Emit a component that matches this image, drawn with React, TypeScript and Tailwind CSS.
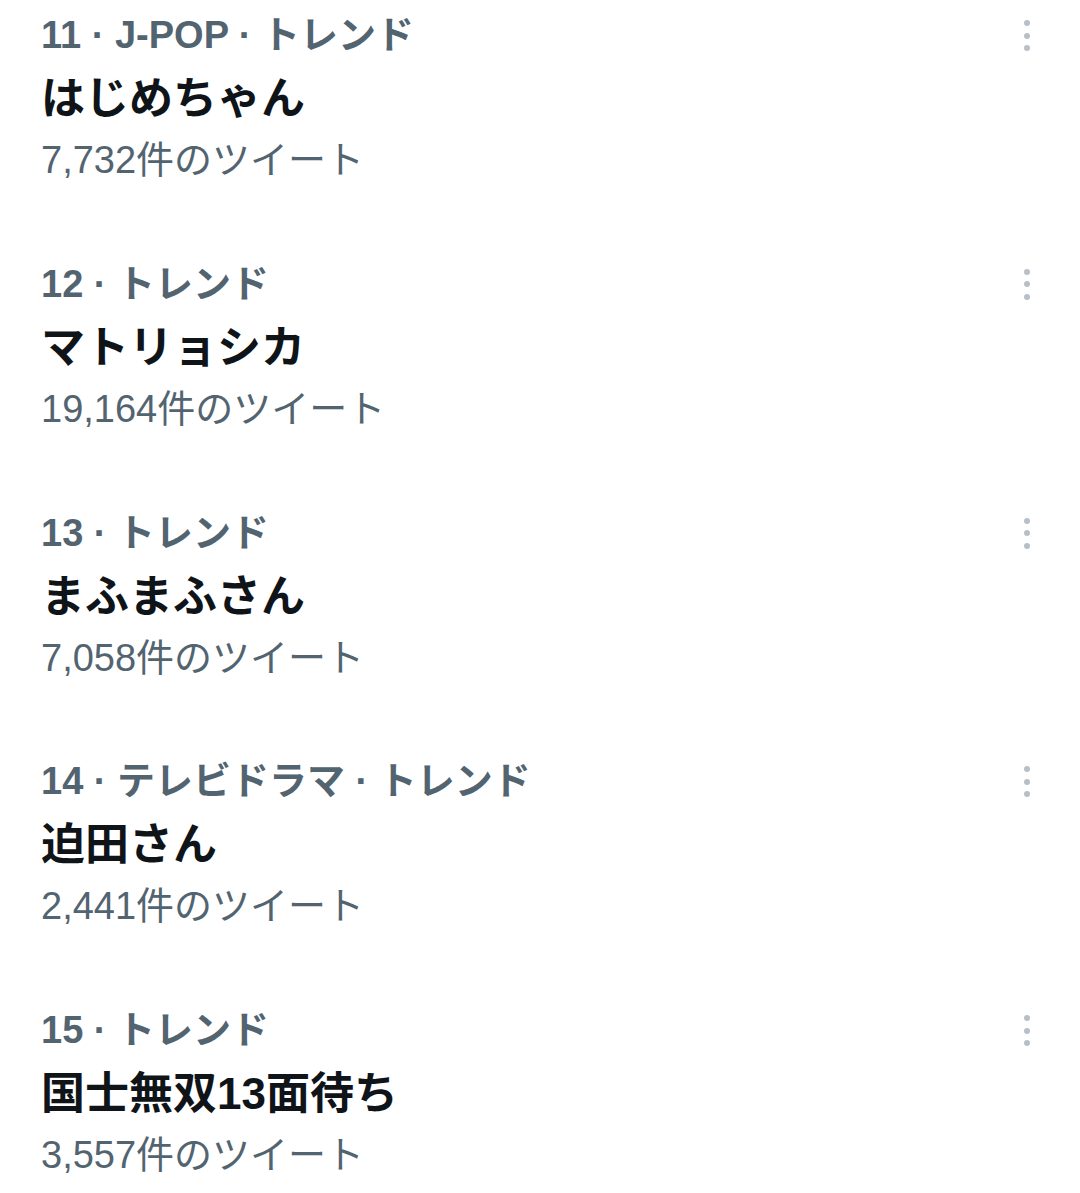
import React from 'react';

type Trend = { meta: string; title: string; count: string };

const trends: Trend[] = [
  { meta: '11 · J-POP · トレンド', title: 'はじめちゃん', count: '7,732件のツイート' },
  { meta: '12 · トレンド', title: 'マトリョシカ', count: '19,164件のツイート' },
  { meta: '13 · トレンド', title: 'まふまふさん', count: '7,058件のツイート' },
  { meta: '14 · テレビドラマ · トレンド', title: '迫田さん', count: '2,441件のツイート' },
  { meta: '15 · トレンド', title: '国士無双13面待ち', count: '3,557件のツイート' },
];

function MoreDots() {
  return (
    <div className="flex flex-col items-center gap-[6.5px] pt-[1px]">
      <span className="block w-[6px] h-[6px] rounded-full bg-[#b8bfc6]" />
      <span className="block w-[6px] h-[6px] rounded-full bg-[#b8bfc6]" />
      <span className="block w-[6px] h-[6px] rounded-full bg-[#b8bfc6]" />
    </div>
  );
}

function TrendRow({ trend }: { trend: Trend }) {
  return (
    <div className="flex justify-between pb-[62.8px]">
      <div className="flex flex-col">
        <div className="text-[38px] leading-[62px] font-bold text-[#536471] whitespace-nowrap">
          {trend.meta}
        </div>
        <div className="mt-[2px] text-[44px] leading-[62px] font-bold text-[#0f1419] whitespace-nowrap">
          {trend.title}
        </div>
        <div className="text-[38px] leading-[60px] text-[#536471] whitespace-nowrap">
          {trend.count}
        </div>
      </div>
      <div className="h-[62px] flex items-center">
        <MoreDots />
      </div>
    </div>
  );
}

export default function App() {
  return (
    <div
      className="w-[1080px] h-[1193px] overflow-hidden bg-white pt-[4px] pl-[41px] pr-[50px]"
      style={{ fontFamily: '"Liberation Sans", "Noto Sans CJK JP", sans-serif' }}
    >
      {trends.map((t) => (
        <TrendRow key={t.meta} trend={t} />
      ))}
    </div>
  );
}
